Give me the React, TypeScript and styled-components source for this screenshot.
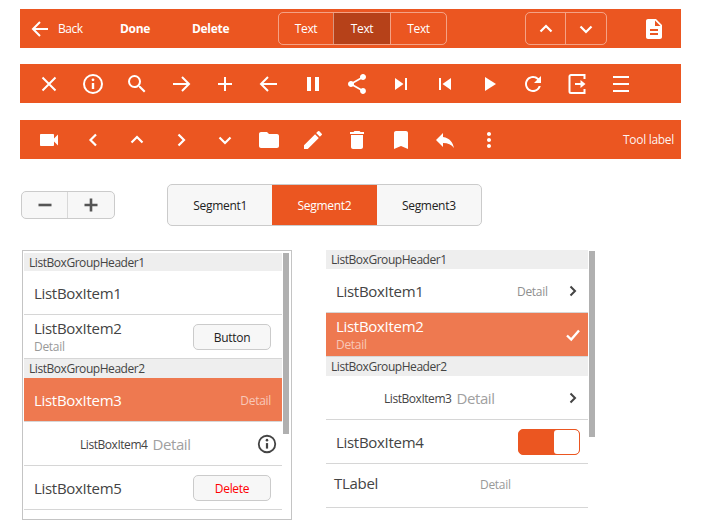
import React from 'react';
import styled, {createGlobalStyle} from 'styled-components';
import {
    MdBookmark,
    MdDelete,
    MdDescription,
    MdEdit,
    MdFolder,
    MdMoreVert,
    MdPause,
    MdPlayArrow,
    MdRefresh,
    MdReply,
    MdSearch,
    MdShare,
    MdSkipNext,
    MdSkipPrevious,
    MdVideocam,
} from 'react-icons/md';

const ORANGE = '#eb5621';
const SELECTED = '#ee7950';
const FONT = '"Open Sans", "Noto Sans", sans-serif';

const GlobalStyle = createGlobalStyle`
    html, body {
        margin: 0;
        padding: 0;
        background: #fff;
    }
    body {
        font-family: ${FONT};
        color: #444;
        letter-spacing: -0.3px;
    }
`;

const Page = styled.div`
    width: 703px;
    height: 529px;
    box-sizing: border-box;
    padding: 9px 22px 0 20px;
    overflow: hidden;
`;

const Toolbar = styled.div<{$gap: number}>`
    height: 39px;
    background: ${ORANGE};
    display: flex;
    align-items: center;
    color: #fff;
    margin-bottom: ${(p) => p.$gap}px;
    font-size: 12px;
`;

const IconRow = styled(Toolbar)`
    padding-left: 7px;
`;

const ToolIcon = styled.div`
    width: 44px;
    height: 39px;
    flex: none;
    display: flex;
    align-items: center;
    justify-content: center;
`;

const BackButton = styled.div`
    display: flex;
    align-items: center;
    gap: 9px;
    width: 100px;
    padding-left: 11px;
    box-sizing: border-box;
    flex: none;
    letter-spacing: -0.5px;
`;

const BoldAction = styled.div<{$width: number}>`
    font-weight: 700;
    width: ${(p) => p.$width}px;
    flex: none;
`;

const OutlineGroup = styled.div<{$left: number}>`
    display: flex;
    height: 33px;
    box-sizing: border-box;
    border: 1px solid rgba(255, 255, 255, 0.45);
    border-radius: 5px;
    overflow: hidden;
    margin-left: ${(p) => p.$left}px;
    flex: none;
`;

const OutlineCell = styled.div<{$width: number; $active?: boolean}>`
    width: ${(p) => p.$width}px;
    display: flex;
    align-items: center;
    justify-content: center;
    background: ${(p) => (p.$active ? '#b64119' : 'transparent')};
    & + & {
        border-left: 1px solid rgba(255, 255, 255, 0.45);
    }
`;

const DocSlot = styled.div`
    margin-left: 25px;
    width: 44px;
    display: flex;
    justify-content: center;
`;

const ToolLabel = styled.div`
    margin-left: auto;
    padding-right: 7px;
    color: rgba(255, 255, 255, 0.95);
`;

const ControlsRow = styled.div`
    display: flex;
    align-items: center;
    height: 42px;
    margin-top: 25px;
    padding-left: 1px;
`;

const Stepper = styled.div`
    width: 94px;
    height: 28px;
    box-sizing: border-box;
    display: flex;
    background: #f7f7f7;
    border: 1px solid #cbcbcb;
    border-radius: 5px;
    color: #555;
    flex: none;
`;

const StepperCell = styled.div<{$width: number}>`
    width: ${(p) => p.$width}px;
    flex: none;
    display: flex;
    align-items: center;
    justify-content: center;
    & + & {
        border-left: 1px solid #d8d8d8;
    }
`;

const Segments = styled.div`
    margin-left: 52px;
    width: 315px;
    height: 42px;
    box-sizing: border-box;
    display: flex;
    background: #f7f7f7;
    border: 1px solid #cbcbcb;
    border-radius: 5px;
    overflow: hidden;
    flex: none;
`;

const Segment = styled.div<{$active?: boolean}>`
    flex: 1;
    display: flex;
    align-items: center;
    justify-content: center;
    font-size: 12px;
    color: ${(p) => (p.$active ? '#fff' : '#222')};
    background: ${(p) => (p.$active ? ORANGE : 'transparent')};
    margin: ${(p) => (p.$active ? '-1px 0' : '0')};
`;

const Lists = styled.div`
    display: flex;
    align-items: flex-start;
    margin-top: 24px;
`;

const FramedList = styled.div`
    position: relative;
    width: 270px;
    height: 270px;
    box-sizing: border-box;
    margin-left: 2px;
    padding: 2px 9px 0 1px;
    border: 1px solid #c4c4c4;
    flex: none;
    overflow: hidden;
`;

const PlainList = styled.div`
    position: relative;
    width: 269px;
    height: 270px;
    box-sizing: border-box;
    margin-left: 34px;
    padding-right: 7px;
    flex: none;
    overflow: hidden;
`;

const Scrollbar = styled.div<{$right: number; $top: number; $height: number}>`
    position: absolute;
    top: ${(p) => p.$top}px;
    right: ${(p) => p.$right}px;
    width: 6px;
    height: ${(p) => p.$height}px;
    background: #b0b0b0;
`;

const GroupHeader = styled.div<{$height?: number}>`
    height: ${(p) => p.$height ?? 19}px;
    line-height: ${(p) => (p.$height ?? 19) + 1}px;
    padding-left: 5px;
    background: #eeeeee;
    font-size: 12px;
    letter-spacing: -0.45px;
    color: #444;
    box-sizing: border-box;
`;

const Row = styled.div<{$selected?: boolean; $height?: number; $left?: number}>`
    height: ${(p) => p.$height ?? 44}px;
    box-sizing: border-box;
    display: flex;
    align-items: center;
    padding: 1px 11px 0 ${(p) => p.$left ?? 10}px;
    border-bottom: 1px solid #d6d6d6;
    background: ${(p) => (p.$selected ? SELECTED : 'transparent')};
    color: ${(p) => (p.$selected ? '#fff' : '#444')};
`;

const ItemStack = styled.div`
    display: flex;
    flex-direction: column;
    padding-top: 1px;
`;

const ItemTitle = styled.div`
    font-size: 15px;
    line-height: 20px;
`;

const StackedTitle = styled(ItemTitle)`
    line-height: 18px;
`;

const SubDetail = styled.div<{$selected?: boolean}>`
    font-size: 12px;
    line-height: 20px;
    color: ${(p) => (p.$selected ? 'rgba(255, 255, 255, 0.6)' : '#999')};
`;

const SideDetail = styled.div<{$selected?: boolean; $width?: number}>`
    margin-left: auto;
    font-size: 12px;
    color: ${(p) => (p.$selected ? 'rgba(255, 255, 255, 0.6)' : '#8f8f8f')};
    ${(p) => (p.$width ? `width: ${p.$width}px;` : '')}
`;

const CenterPair = styled.div<{$left: number}>`
    display: flex;
    align-items: center;
    gap: 5px;
    margin-left: ${(p) => p.$left}px;
`;

const SmallTitle = styled.div`
    font-size: 12px;
    letter-spacing: -0.45px;
    color: #444;
`;

const LargeDetail = styled.div`
    font-size: 15px;
    letter-spacing: -0.4px;
    color: #a0a0a0;
`;

const RowEnd = styled.div<{$shift: number}>`
    margin-left: auto;
    margin-right: -${(p) => p.$shift}px;
    display: flex;
    align-items: center;
`;

const RowButton = styled.div<{$danger?: boolean}>`
    margin-left: auto;
    width: 78px;
    height: 26px;
    box-sizing: border-box;
    display: flex;
    align-items: center;
    justify-content: center;
    background: #f7f7f7;
    border: 1px solid #cbcbcb;
    border-radius: 5px;
    font-size: 12px;
    color: ${(p) => (p.$danger ? '#f00' : '#222')};
`;

const Toggle = styled.div`
    margin-left: auto;
    margin-right: -3px;
    width: 62px;
    height: 26px;
    box-sizing: border-box;
    display: flex;
    justify-content: flex-end;
    background: ${ORANGE};
    border: 1px solid ${ORANGE};
    border-radius: 5px;
    overflow: hidden;
`;

const ToggleKnob = styled.div`
    width: 25px;
    background: #fff;
    border-radius: 3px 4px 4px 3px;
`;

const TLabelRow = styled(Row)`
    padding-left: 8px;
    padding-bottom: 3px;
`;

const TLabelText = styled.div`
    font-size: 15px;
    width: 146px;
    margin-bottom: 4px;
`;

type LineProps = {d: string; size?: number; width?: number};

const Line = ({d, size = 24, width = 2}: LineProps) => (
    <svg
        width={size}
        height={size}
        viewBox='0 0 24 24'
        fill='none'
        stroke='currentColor'
        strokeWidth={width}
    >
        <path d={d}/>
    </svg>
);

const Close = () => <Line d='M5.5 5.5L18.5 18.5M18.5 5.5L5.5 18.5'/>;
const Plus = () => <Line d='M12 5V19M5 12H19'/>;
const ArrowRight = () => <Line d='M4 12H20M13 5L20 12L13 19'/>;
const ArrowLeft = () => <Line d='M20 12H4M11 5L4 12L11 19'/>;
const Burger = () => <Line d='M4 5H20M4 12H20M4 19H20'/>;
const ChevronLeft = () => <Line d='M15 6.5L9.5 12L15 17.5' width={2.2}/>;
const ChevronRight = () => <Line d='M9.5 6.5L15 12L9.5 17.5' width={2.2}/>;
const ChevronUp = () => <Line d='M6.5 14.5L12 9L17.5 14.5' width={2.2}/>;
const ChevronDown = () => <Line d='M6.5 9.5L12 15L17.5 9.5' width={2.2}/>;

const InfoCircle = ({size = 24}: {size?: number}) => (
    <svg
        width={size}
        height={size}
        viewBox='0 0 24 24'
        fill='none'
        stroke='currentColor'
        strokeWidth={2}
    >
        <circle
            cx={12}
            cy={12}
            r={9}
        />
        <path
            d='M12 11V17'
            strokeWidth={2.4}
        />
        <circle
            cx={12}
            cy={7.8}
            r={1.4}
            fill='currentColor'
            stroke='none'
        />
    </svg>
);

const ExitBox = () => (
    <svg
        width={24}
        height={24}
        viewBox='0 0 24 24'
        fill='none'
        stroke='currentColor'
        strokeWidth={2}
    >
        <path d='M19.5 7V3H6a1.5 1.5 0 0 0-1.5 1.5V19.5a1.5 1.5 0 0 0 1.5 1.5H19.5V17'/>
        <path d='M10 12H16'/>
        <path
            d='M15.5 8L20.5 12L15.5 16Z'
            fill='currentColor'
            stroke='none'
        />
    </svg>
);

const Check = () => (
    <svg
        width={18}
        height={18}
        viewBox='0 0 18 18'
        fill='none'
        stroke='currentColor'
        strokeWidth={2.4}
    >
        <path d='M3 9.5L7.2 13.5L15 4.5'/>
    </svg>
);

const SmallChevron = () => (
    <svg
        width={12}
        height={12}
        viewBox='0 0 12 12'
        fill='none'
        stroke='#444'
        strokeWidth={2}
    >
        <path d='M3.5 1.5L8 6L3.5 10.5'/>
    </svg>
);

const StepGlyph = ({d}: {d: string}) => (
    <svg
        width={16}
        height={16}
        viewBox='0 0 16 16'
        fill='none'
        stroke='currentColor'
        strokeWidth={2.6}
    >
        <path d={d}/>
    </svg>
);

const secondRow = [
    <Close key='close'/>,
    <InfoCircle key='info'/>,
    <MdSearch
        key='search'
        size={24}
    />,
    <ArrowRight key='right'/>,
    <Plus key='plus'/>,
    <ArrowLeft key='left'/>,
    <MdPause
        key='pause'
        size={24}
    />,
    <MdShare
        key='share'
        size={24}
    />,
    <MdSkipNext
        key='next'
        size={24}
    />,
    <MdSkipPrevious
        key='prev'
        size={24}
    />,
    <MdPlayArrow
        key='play'
        size={24}
    />,
    <MdRefresh
        key='refresh'
        size={24}
    />,
    <ExitBox key='exit'/>,
    <Burger key='menu'/>,
];

const thirdRow = [
    <MdVideocam
        key='video'
        size={24}
    />,
    <ChevronLeft key='cl'/>,
    <ChevronUp key='cu'/>,
    <ChevronRight key='cr'/>,
    <ChevronDown key='cd'/>,
    <MdFolder
        key='folder'
        size={24}
    />,
    <MdEdit
        key='edit'
        size={24}
    />,
    <MdDelete
        key='delete'
        size={24}
    />,
    <MdBookmark
        key='bookmark'
        size={24}
    />,
    <MdReply
        key='reply'
        size={24}
    />,
    <MdMoreVert
        key='more'
        size={24}
    />,
];

export default function App() {
    return (
        <Page>
            <GlobalStyle/>
            <Toolbar $gap={16}>
                <BackButton>
                    <svg
                        width={18}
                        height={18}
                        viewBox='0 0 18 18'
                        fill='none'
                        stroke='currentColor'
                        strokeWidth={2}
                    >
                        <path d='M17 9H2M9 2L2 9L9 16'/>
                    </svg>
                    {'Back'}
                </BackButton>
                <BoldAction $width={72}>{'Done'}</BoldAction>
                <BoldAction $width={86}>{'Delete'}</BoldAction>
                <OutlineGroup $left={0}>
                    <OutlineCell $width={54}>{'Text'}</OutlineCell>
                    <OutlineCell
                        $width={56}
                        $active={true}
                    >
                        {'Text'}
                    </OutlineCell>
                    <OutlineCell $width={55}>{'Text'}</OutlineCell>
                </OutlineGroup>
                <OutlineGroup $left={78}>
                    <OutlineCell $width={39}><ChevronUp/></OutlineCell>
                    <OutlineCell $width={40}><ChevronDown/></OutlineCell>
                </OutlineGroup>
                <DocSlot>
                    <MdDescription size={24}/>
                </DocSlot>
            </Toolbar>
            <IconRow $gap={17}>
                {secondRow.map((icon) => <ToolIcon key={icon.key}>{icon}</ToolIcon>)}
            </IconRow>
            <IconRow $gap={0}>
                {thirdRow.map((icon) => <ToolIcon key={icon.key}>{icon}</ToolIcon>)}
                <ToolLabel>{'Tool label'}</ToolLabel>
            </IconRow>
            <ControlsRow>
                <Stepper>
                    <StepperCell $width={45}><StepGlyph d='M1.5 8H14.5'/></StepperCell>
                    <StepperCell $width={46}><StepGlyph d='M8 1.5V14.5M1.5 8H14.5'/></StepperCell>
                </Stepper>
                <Segments>
                    <Segment>{'Segment1'}</Segment>
                    <Segment $active={true}>{'Segment2'}</Segment>
                    <Segment>{'Segment3'}</Segment>
                </Segments>
            </ControlsRow>
            <Lists>
                <FramedList>
                    <Scrollbar
                        $right={2}
                        $top={2}
                        $height={181}
                    />
                    <GroupHeader $height={18}>{'ListBoxGroupHeader1'}</GroupHeader>
                    <Row>
                        <ItemTitle>{'ListBoxItem1'}</ItemTitle>
                    </Row>
                    <Row>
                        <ItemStack>
                            <StackedTitle>{'ListBoxItem2'}</StackedTitle>
                            <SubDetail>{'Detail'}</SubDetail>
                        </ItemStack>
                        <RowButton>{'Button'}</RowButton>
                    </Row>
                    <GroupHeader>{'ListBoxGroupHeader2'}</GroupHeader>
                    <Row $selected={true}>
                        <ItemTitle>{'ListBoxItem3'}</ItemTitle>
                        <SideDetail $selected={true}>{'Detail'}</SideDetail>
                    </Row>
                    <Row>
                        <CenterPair $left={46}>
                            <SmallTitle>{'ListBoxItem4'}</SmallTitle>
                            <LargeDetail>{'Detail'}</LargeDetail>
                        </CenterPair>
                        <RowEnd $shift={7}><InfoCircle size={22}/></RowEnd>
                    </Row>
                    <Row>
                        <ItemTitle>{'ListBoxItem5'}</ItemTitle>
                        <RowButton $danger={true}>{'Delete'}</RowButton>
                    </Row>
                </FramedList>
                <PlainList>
                    <Scrollbar
                        $right={0}
                        $top={1}
                        $height={186}
                    />
                    <GroupHeader>{'ListBoxGroupHeader1'}</GroupHeader>
                    <Row>
                        <ItemTitle>{'ListBoxItem1'}</ItemTitle>
                        <RowEnd $shift={2}>
                            <SideDetail $width={50}>{'Detail'}</SideDetail>
                            <SmallChevron/>
                        </RowEnd>
                    </Row>
                    <Row $selected={true}>
                        <ItemStack>
                            <StackedTitle>{'ListBoxItem2'}</StackedTitle>
                            <SubDetail $selected={true}>{'Detail'}</SubDetail>
                        </ItemStack>
                        <RowEnd $shift={5}><Check/></RowEnd>
                    </Row>
                    <GroupHeader>{'ListBoxGroupHeader2'}</GroupHeader>
                    <Row>
                        <CenterPair $left={48}>
                            <SmallTitle>{'ListBoxItem3'}</SmallTitle>
                            <LargeDetail>{'Detail'}</LargeDetail>
                        </CenterPair>
                        <RowEnd $shift={2}><SmallChevron/></RowEnd>
                    </Row>
                    <Row>
                        <ItemTitle>{'ListBoxItem4'}</ItemTitle>
                        <Toggle><ToggleKnob/></Toggle>
                    </Row>
                    <TLabelRow>
                        <TLabelText>{'TLabel'}</TLabelText>
                        <SubDetail>{'Detail'}</SubDetail>
                    </TLabelRow>
                </PlainList>
            </Lists>
        </Page>
    );
}
